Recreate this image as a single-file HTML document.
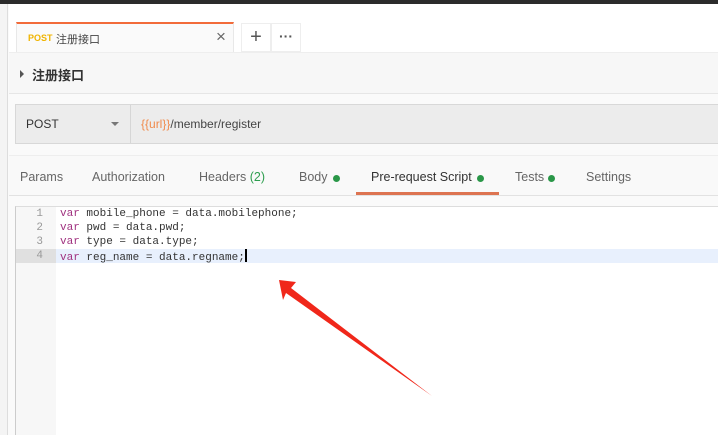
<!DOCTYPE html>
<html><head><meta charset="utf-8"><style>
*{margin:0;padding:0;box-sizing:border-box}
body{width:718px;height:435px;overflow:hidden;background:#fafafa;font-family:"Liberation Sans","Noto Sans CJK SC",sans-serif;position:relative;color:#505050}
.a{position:absolute}
.code{font-family:"Liberation Mono","DejaVu Sans Mono",monospace;font-size:11px;line-height:14px;color:#333}
.kw{color:#a0317f}
</style></head><body>
<div class="a" style="left:0;top:0;width:718px;height:4px;background:#2b2b2b"></div>
<div class="a" style="left:0;top:4px;width:8px;height:431px;background:#f4f4f4;border-right:1px solid #ddd"></div>
<div class="a" style="left:9px;top:4px;width:709px;height:48px;background:#fff"></div>
<div class="a" style="left:16px;top:22px;width:218px;height:31px;background:#fafafa;border:1px solid #e8e8e8;border-top:2px solid #f26b3a"></div>
<div class="a" style="left:28px;top:33px;font-size:9px;font-weight:bold;color:#f0b400">POST</div>
<div class="a" style="left:56px;top:31px;font-size:11px;color:#444">注册接口</div>
<div class="a" style="left:216px;top:27px;font-size:17px;color:#666">×</div>
<div class="a" style="left:241px;top:23px;width:30px;height:29px;background:#fff;border:1px solid #eee;text-align:center;font-size:20px;line-height:27px;color:#555">+</div>
<div class="a" style="left:271px;top:23px;width:30px;height:29px;background:#fff;border:1px solid #eee;text-align:center;font-size:14px;line-height:25px;color:#555;font-weight:bold">···</div>
<div class="a" style="left:9px;top:52px;width:709px;height:42px;background:#f7f7f7;border-top:1px solid #eee;border-bottom:1px solid #e6e6e6"></div>
<div class="a" style="left:20px;top:70px;width:0;height:0;border-left:4px solid #555;border-top:4px solid transparent;border-bottom:4px solid transparent"></div>
<div class="a" style="left:32px;top:65px;font-size:13px;font-weight:bold;color:#333">注册接口</div>
<div class="a" style="left:15px;top:104px;width:703px;height:40px;background:#ececec;border:1px solid #d8d8d8;border-right:none"></div>
<div class="a" style="left:130px;top:105px;width:1px;height:38px;background:#d6d6d6"></div>
<div class="a" style="left:26px;top:117px;font-size:12px;color:#333">POST</div>
<div class="a" style="left:111px;top:122px;width:0;height:0;border-top:4px solid #777;border-left:4px solid transparent;border-right:4px solid transparent"></div>
<div class="a" style="left:141px;top:117px;font-size:12px;color:#444"><span style="color:#f08a4b">{{url}}</span>/member/register</div>
<div class="a" style="left:9px;top:155px;width:709px;height:41px;background:#f9f9f9;border-top:1px solid #eee;border-bottom:1px solid #e2e2e2"></div>
<div class="a" style="top:170px;left:20px;font-size:12.5px;color:#666;white-space:nowrap">Params</div>
<div class="a" style="top:170px;left:92px;font-size:12.5px;color:#666">Authorization</div>
<div class="a" style="top:170px;left:199px;font-size:12.5px;color:#666">Headers <span style="color:#2e9e4f">(2)</span></div>
<div class="a" style="top:170px;left:299px;font-size:12.5px;color:#666">Body</div>
<div class="a" style="top:175px;left:333px;width:7px;height:7px;border-radius:50%;background:#2a9748"></div>
<div class="a" style="top:170px;left:371px;font-size:12.5px;color:#333">Pre-request Script</div>
<div class="a" style="top:175px;left:477px;width:7px;height:7px;border-radius:50%;background:#2a9748"></div>
<div class="a" style="top:192px;left:356px;width:143px;height:3px;background:#dd7451"></div>
<div class="a" style="top:170px;left:515px;font-size:12.5px;color:#666">Tests</div>
<div class="a" style="top:175px;left:548px;width:7px;height:7px;border-radius:50%;background:#2a9748"></div>
<div class="a" style="top:170px;left:586px;font-size:12.5px;color:#666">Settings</div>
<div class="a" style="left:15px;top:206px;width:703px;height:229px;background:#fff;border-left:1px solid #ccc;border-top:1px solid #ddd"></div>
<div class="a" style="left:16px;top:207px;width:40px;height:228px;background:#f7f7f7"></div>
<div class="a" style="left:16px;top:249px;width:40px;height:14px;background:#e0e0e0"></div>
<div class="a" style="left:56px;top:249px;width:662px;height:14px;background:#e8f0fd"></div>
<div class="a code" style="left:16px;top:207px;width:27px;text-align:right;color:#999">1<br>2<br>3<br>4</div>
<div class="a code" style="left:60px;top:207px;white-space:pre"><span class="kw">var</span> mobile_phone = data.mobilephone;
<span class="kw">var</span> pwd = data.pwd;
<span class="kw">var</span> type = data.type;
<span class="kw">var</span> reg_name = data.regname;<span style="display:inline-block;width:2px;height:13px;background:#000;vertical-align:-2px"></span></div>
<svg class="a" style="left:0;top:0" width="718" height="435"><path d="M279 280 L296 282 L291 288 L432 396 L286 293 L283 300 Z" fill="#f0271a"/></svg>
</body></html>
